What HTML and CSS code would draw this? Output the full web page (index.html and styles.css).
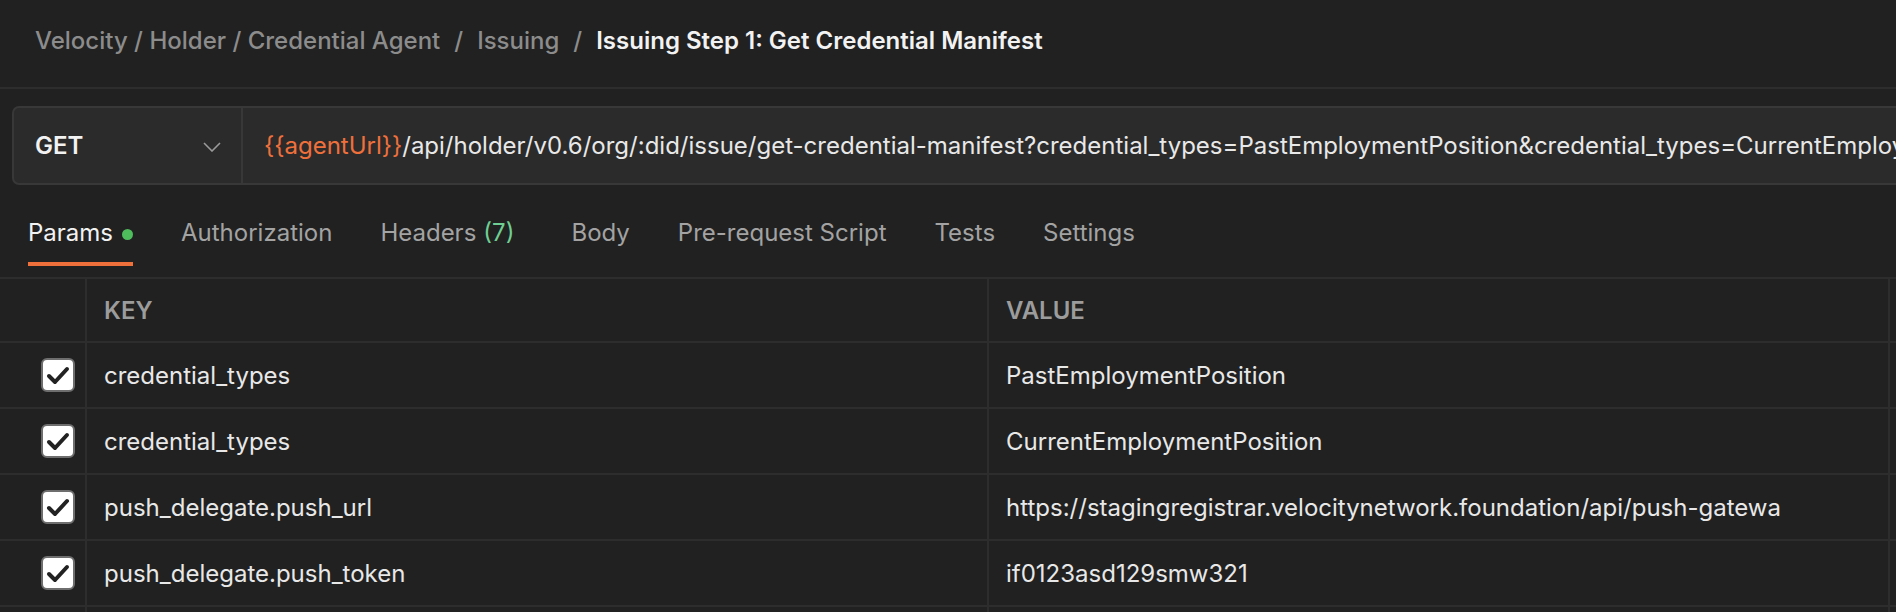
FILE: index.html
```html
<!DOCTYPE html>
<html>
<head>
<meta charset="utf-8">
<link rel="stylesheet" href="styles.css">
</head>
<body>
<header class="topbar">
  <nav class="crumbs">
    <span class="crumb">Velocity / Holder / Credential Agent</span>
    <span class="sep">/</span>
    <span class="crumb">Issuing</span>
    <span class="sep">/</span>
    <span class="crumb current">Issuing Step 1: Get Credential Manifest</span>
  </nav>
</header>

<section class="urlbar">
  <div class="method">
    <span class="method-name">GET</span>
    <svg class="chevron" width="18" height="10" viewBox="0 0 18 10"><path d="M1 1 L9 9 L17 1" fill="none" stroke="#9a9a9a" stroke-width="1.6"/></svg>
  </div>
  <div class="url"><span class="var">{{agentUrl}}</span>/api/holder/v0.6/org/:did/issue/get-credential-manifest?credential_types=PastEmploymentPosition&amp;credential_types=CurrentEmploymentPosition&amp;push_delegate.push_url=https://stagingregistrar.velocitynetwork.foundation/api/push-gateway</div>
</section>

<nav class="tabs">
  <div class="tab active">Params <span class="dot"></span></div>
  <div class="tab">Authorization</div>
  <div class="tab headers">Headers <span class="count">(7)</span></div>
  <div class="tab">Body</div>
  <div class="tab">Pre-request Script</div>
  <div class="tab">Tests</div>
  <div class="tab">Settings</div>
</nav>

<div class="table">
  <div class="row head">
    <div class="cell check"></div>
    <div class="cell key">KEY</div>
    <div class="cell value">VALUE</div>
    <div class="cell desc"></div>
  </div>
  <div class="row">
    <div class="cell check"><span class="box"><svg width="24" height="20" viewBox="0 0 24 20"><path d="M3 11 L9 17 L21 4" fill="none" stroke="#222" stroke-width="4" stroke-linecap="round" stroke-linejoin="round"/></svg></span></div>
    <div class="cell key">credential_types</div>
    <div class="cell value">PastEmploymentPosition</div>
    <div class="cell desc"></div>
  </div>
  <div class="row">
    <div class="cell check"><span class="box"><svg width="24" height="20" viewBox="0 0 24 20"><path d="M3 11 L9 17 L21 4" fill="none" stroke="#222" stroke-width="4" stroke-linecap="round" stroke-linejoin="round"/></svg></span></div>
    <div class="cell key">credential_types</div>
    <div class="cell value">CurrentEmploymentPosition</div>
    <div class="cell desc"></div>
  </div>
  <div class="row">
    <div class="cell check"><span class="box"><svg width="24" height="20" viewBox="0 0 24 20"><path d="M3 11 L9 17 L21 4" fill="none" stroke="#222" stroke-width="4" stroke-linecap="round" stroke-linejoin="round"/></svg></span></div>
    <div class="cell key">push_delegate.push_url</div>
    <div class="cell value">https://stagingregistrar.velocitynetwork.foundation/api/push-gatewa</div>
    <div class="cell desc"></div>
  </div>
  <div class="row">
    <div class="cell check"><span class="box"><svg width="24" height="20" viewBox="0 0 24 20"><path d="M3 11 L9 17 L21 4" fill="none" stroke="#222" stroke-width="4" stroke-linecap="round" stroke-linejoin="round"/></svg></span></div>
    <div class="cell key">push_delegate.push_token</div>
    <div class="cell value">if0123asd129smw321</div>
    <div class="cell desc"></div>
  </div>
  <div class="row">
    <div class="cell check"></div>
    <div class="cell key"></div>
    <div class="cell value"></div>
    <div class="cell desc"></div>
  </div>
</div>
</body>
</html>
```
FILE: styles.css
```css
html, body {
  margin: 0;
  padding: 0;
  background: #212121;
  height: 100%;
  overflow: hidden;
}
body {
  font-family: Inter, "Noto Sans", "Liberation Sans", sans-serif;
  color: #e8e8e8;
  width: 1896px;
}

.topbar {
  height: 89px;
  border-bottom: 2px solid #2d2d2d;
  display: flex;
  align-items: center;
  padding-left: 35px;
  box-sizing: border-box;
}
.crumbs {
  display: flex;
  align-items: center;
  font-size: 24px;
  font-weight: 500;
  gap: 14px;
  margin-top: -7px;
}
.crumb { color: #8c8c8c; }
.sep { color: #8c8c8c; }
.crumb.current { color: #f2f2f2; font-weight: 600; }

.urlbar {
  margin: 17px -40px 0 12px;
  height: 79px;
  box-sizing: border-box;
  border: 2px solid #383838;
  border-radius: 7px;
  background: #2b2b2b;
  display: flex;
  align-items: stretch;
}
.method {
  width: 229px;
  flex: none;
  border-right: 2px solid #383838;
  display: flex;
  align-items: center;
  justify-content: space-between;
  padding: 0 20px 0 21px;
  box-sizing: border-box;
}
.method-name {
  font-size: 24px;
  font-weight: 600;
  color: #f2f2f2;
}
.chevron { margin-top: 2px; }
.url {
  flex: 1;
  display: flex;
  align-items: center;
  padding-left: 21px;
  font-size: 24px;
  color: #e8e8e8;
  white-space: pre;
  overflow: hidden;
}
.var { color: #f0703c; }

.tabs {
  display: flex;
  align-items: flex-start;
  gap: 48px;
  padding-left: 28px;
  height: 92px;
  box-sizing: border-box;
  padding-top: 33px;
}
.tab {
  font-size: 24px;
  color: #a3a3a3;
  height: 48px;
  box-sizing: border-box;
  display: flex;
  align-items: flex-start;
  gap: 9px;
  line-height: 30px;
}
.tab.active {
  color: #f2f2f2;
  border-bottom: 4px solid #f0703c;
}
.tab.headers { margin-right: 9px; gap: 7px; }
.dot {
  width: 11px;
  height: 11px;
  border-radius: 50%;
  background: #4ebd5c;
  margin-top: 11px;
}
.count { color: #6fcf93; }

.table {
  border-top: 2px solid #2d2d2d;
}
.row {
  display: grid;
  grid-template-columns: 85px 902px 901px 1fr;
  height: 66px;
  border-bottom: 2px solid #2d2d2d;
  box-sizing: border-box;
}
.row:first-child { height: 64px; }
.cell {
  display: flex;
  align-items: center;
  font-size: 24px;
  color: #e8e8e8;
  white-space: nowrap;
  overflow: hidden;
}
.cell.key, .cell.value, .cell.desc {
  border-left: 2px solid #2d2d2d;
  padding-left: 17px;
}
.row.head .cell {
  font-weight: 600;
  color: #9c9c9c;
  font-size: 24px;
}
.cell.check {
  justify-content: flex-end;
  padding-right: 10px;
}
.box {
  width: 34px;
  height: 34px;
  box-sizing: border-box;
  border: 2px solid #6e6e6e;
  border-radius: 6px;
  background: #ffffff;
  display: flex;
  align-items: center;
  justify-content: center;
}
```
